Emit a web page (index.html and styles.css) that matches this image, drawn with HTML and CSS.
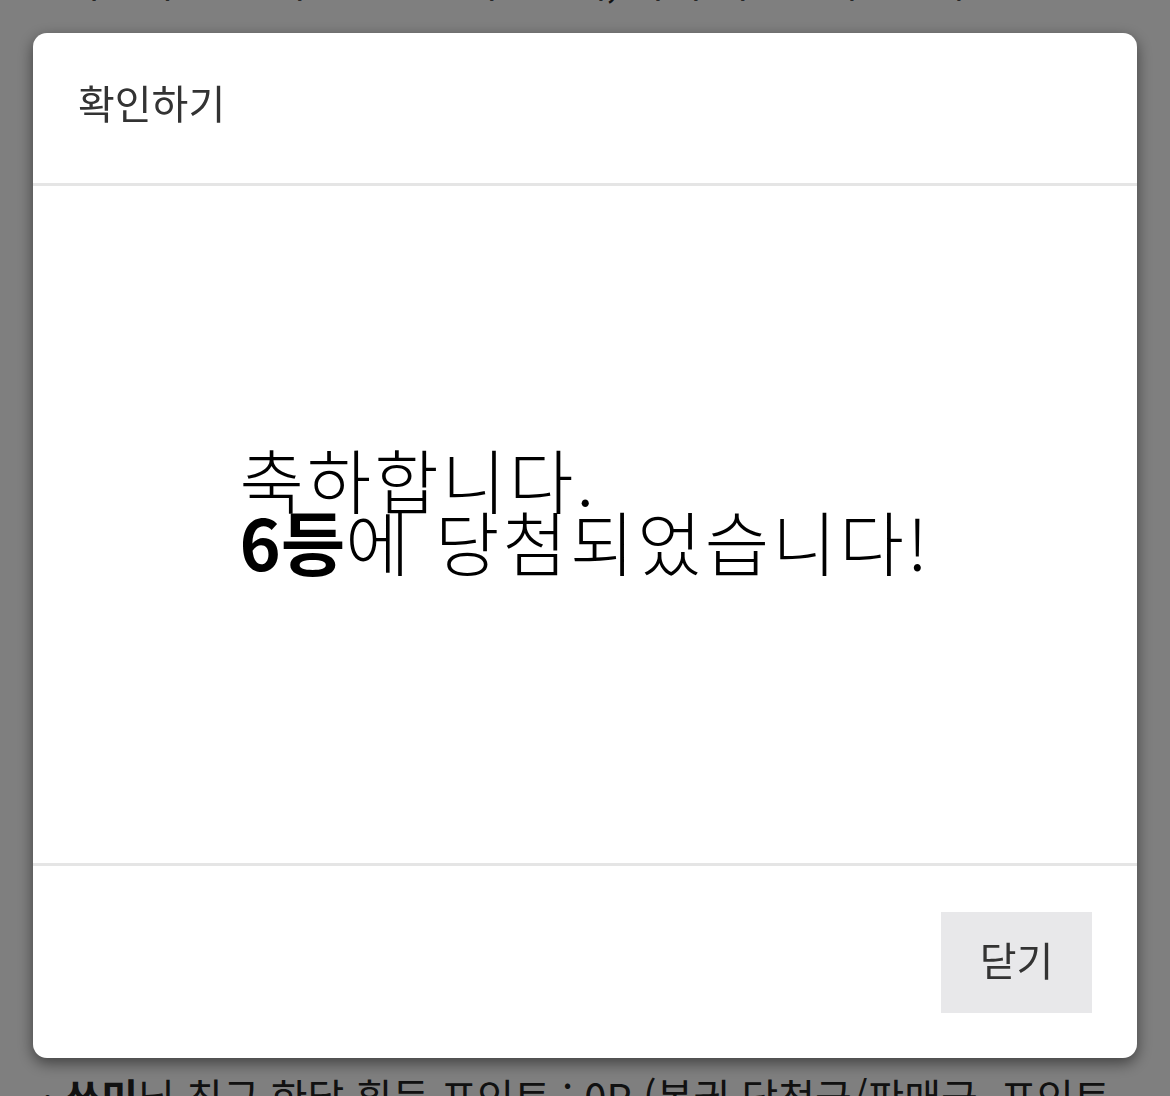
FILE: index.html
```html
<!DOCTYPE html>
<html lang="ko">
  <head>
    <meta charset="UTF-8" />
    <meta name="viewport" content="width=device-width, initial-scale=1.0" />
    <title>확인하기</title>
    <link rel="stylesheet" href="styles.css">
  </head>
  <body>
    <div class="page">
      <p class="line line-top">· 최근 구입한 복권 : 일반 복권 1매, 즉석 복권 0매 · 합계 0P</p>
      <p class="line line-bottom">· <b>쏘미</b>님 최근 한달 획득 포인트 : 0P (복권 당첨금/판매금, 포인트</p>
    </div>

    <div class="overlay">
      <div class="modal">
        <div class="modal-header">
          <h4>확인하기</h4>
        </div>
        <div class="modal-body">
          <p class="result">축하합니다.<br><b>6등</b>에 당첨되었습니다!</p>
        </div>
        <div class="modal-footer">
          <button class="close-btn">닫기</button>
        </div>
      </div>
    </div>
  </body>
</html>
```

FILE: styles.css
```css
* {
  padding: 0;
  margin: 0;
  box-sizing: border-box;
}

body {
  font-family: 'Noto Sans CJK KR', 'Noto Sans', sans-serif;
  background: #fff;
  color: #222;
  overflow: hidden;
}

.page {
  height: 100vh;
  display: flex;
  flex-direction: column;
  justify-content: space-between;
  padding-left: 42px;
}

.line {
  font-size: 40px;
  line-height: 52px;
  white-space: nowrap;
}

.line-top {
  margin-top: -46px;
}

.line-bottom {
  margin-bottom: -26px;
}

.overlay {
  position: fixed;
  inset: 0;
  background: rgba(0, 0, 0, 0.5);
  display: flex;
  justify-content: center;
  padding-top: 33px;
}

.modal {
  width: 1104px;
  height: 1025px;
  background: #fff;
  border-radius: 14px;
  box-shadow: 0 5px 15px rgba(0, 0, 0, 0.5);
  display: flex;
  flex-direction: column;
}

.modal-header {
  height: 153px;
  padding: 0 45px;
  display: flex;
  align-items: center;
  border-bottom: 3px solid #e5e5e5;
}

.modal-header h4 {
  font-size: 40px;
  font-weight: 400;
  color: #333;
  margin-top: -12px;
}

.modal-body {
  flex-grow: 1;
  display: flex;
  align-items: center;
  justify-content: center;
  border-bottom: 3px solid #e5e5e5;
  padding-bottom: 30px;
}

.result {
  font-size: 70px;
  font-weight: 300;
  line-height: 62px;
  letter-spacing: 3px;
  color: #000;
}

.result b {
  font-weight: 700;
  letter-spacing: 0;
}

.modal-footer {
  height: 192px;
  padding: 0 45px;
  display: flex;
  align-items: center;
  justify-content: flex-end;
}

.close-btn {
  width: 151px;
  height: 101px;
  border: none;
  background: #e8e8ea;
  color: #333;
  font-family: inherit;
  font-size: 40px;
  padding-bottom: 6px;
}
```
